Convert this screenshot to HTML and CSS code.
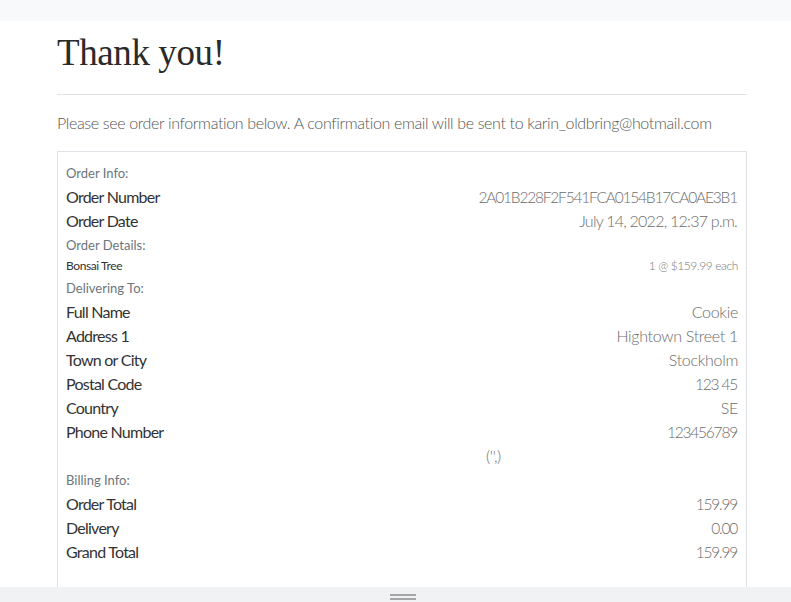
FILE: index.html
```html
<!DOCTYPE html>
<html>
<head>
<meta charset="utf-8">
<link rel="stylesheet" href="styles.css">
</head>
<body>
<div class="topbar"></div>
<main class="container">
  <h1 class="title">Thank you!</h1>
  <hr class="rule">
  <p class="lead">Please see order information below. A confirmation email will be sent to karin_oldbring@hotmail.com</p>
  <div class="box">
    <div class="section">Order Info:</div>
    <div class="row"><span class="label">Order Number</span><span class="value num">2A01B228F2F541FCA0154B17CA0AE3B1</span></div>
    <div class="row"><span class="label">Order Date</span><span class="value date">July 14, 2022, 12:37 p.m.</span></div>
    <div class="section">Order Details:</div>
    <div class="row small"><span class="label">Bonsai Tree</span><span class="value">1 @ $159.99 each</span></div>
    <div class="section">Delivering To:</div>
    <div class="row"><span class="label">Full Name</span><span class="value">Cookie</span></div>
    <div class="row"><span class="label">Address 1</span><span class="value">Hightown Street 1</span></div>
    <div class="row"><span class="label">Town or City</span><span class="value">Stockholm</span></div>
    <div class="row"><span class="label">Postal Code</span><span class="value num">123 45</span></div>
    <div class="row"><span class="label">Country</span><span class="value">SE</span></div>
    <div class="row"><span class="label">Phone Number</span><span class="value num">123456789</span></div>
    <div class="row tuple"><span class="value">('',)</span></div>
    <div class="section">Billing Info:</div>
    <div class="row"><span class="label">Order Total</span><span class="value num">159.99</span></div>
    <div class="row"><span class="label">Delivery</span><span class="value num">0.00</span></div>
    <div class="row"><span class="label">Grand Total</span><span class="value num">159.99</span></div>
  </div>
</main>
<div class="bottombar"><span class="grip"></span></div>
</body>
</html>
```
FILE: styles.css
```css
html, body {
  margin: 0;
  padding: 0;
  height: 602px;
  overflow: hidden;
  background: #fff;
  font-family: Lato, "Open Sans", sans-serif;
  color: #212529;
}
.topbar {
  height: 21px;
  background: #f8f9fa;
}
.container {
  width: 690px;
  margin-left: 57px;
}
.title {
  font-family: "Liberation Serif", serif;
  font-weight: 400;
  font-size: 37px;
  letter-spacing: -0.4px;
  line-height: 44px;
  margin: 10px 0 0 0;
  color: #2a2a2a;
}
.rule {
  border: 0;
  border-top: 1px solid #e3e3e3;
  margin: 19px 0 0 0;
}
.lead {
  font-size: 16px;
  font-weight: 300;
  color: #555;
  margin: 17px 0 17px 0;
  line-height: 22px;
  letter-spacing: -0.36px;
}
.box {
  border: 1px solid #dee2e6;
  border-bottom: 0;
  padding: 9px 8px 40px 8px;
  height: 500px;
}
.section {
  font-size: 13px;
  color: #6c757d;
  font-weight: 400;
  line-height: 24px;
}
.row {
  display: flex;
  justify-content: space-between;
  align-items: baseline;
  font-size: 16px;
  line-height: 24px;
}
.label {
  color: #333;
  font-weight: 400;
  letter-spacing: -0.75px;
}
.value {
  color: #6c6c6c;
  font-weight: 300;
  letter-spacing: -0.3px;
}
.value.num {
  font-size: 15.5px;
  letter-spacing: -1.2px;
  margin-right: 1px;
}
.value.date {
  letter-spacing: -0.75px;
  margin-right: 1px;
}
.row.small {
  font-size: 12px;
  line-height: 18px;
  padding: 0 0 1px 0;
}
.row.small .label {
  letter-spacing: -0.4px;
}
.row.small .value {
  color: #777;
  letter-spacing: -0.4px;
}
.row.tuple {
  justify-content: flex-start;
  padding-left: 420px;
}
.bottombar {
  position: fixed;
  left: 0;
  right: 0;
  bottom: 0;
  height: 15px;
  background: #f1f2f4;
  display: flex;
  justify-content: center;
}
.grip {
  width: 26px;
  height: 6px;
  margin-top: 7px;
  margin-left: 14px;
  border-top: 2px solid #a6a6a6;
  border-bottom: 2px solid #a6a6a6;
  box-sizing: border-box;
}
```
